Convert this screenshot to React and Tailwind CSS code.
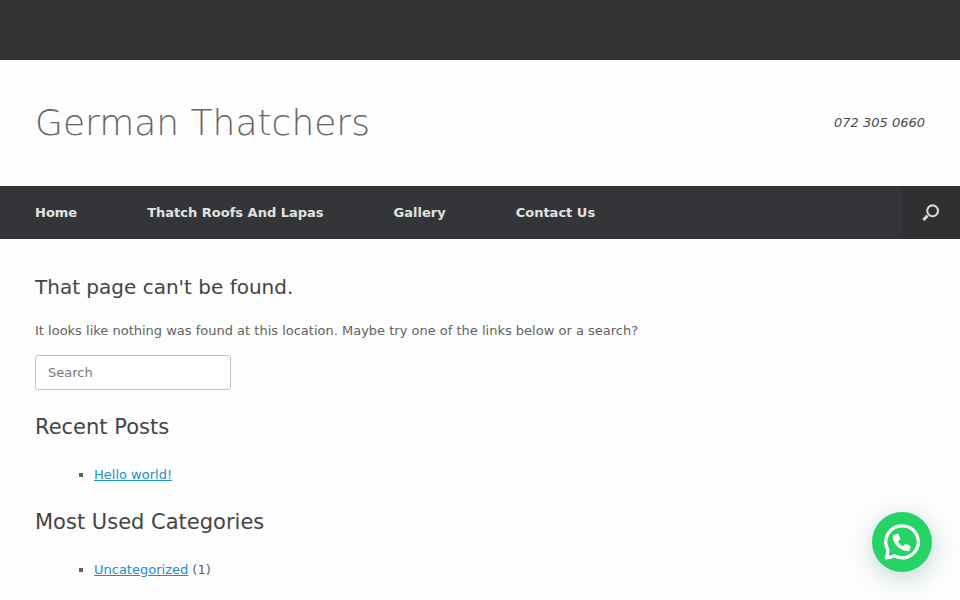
const navLinks = ['Home', 'Thatch Roofs And Lapas', 'Gallery', 'Contact Us']

function Header() {
  return (
    <header>
      <div className="h-[60px] bg-[#2f3132]"></div>
      <div className="flex items-center justify-between px-[35px] py-9">
        <h1 className="text-4xl leading-[54px] font-extralight text-[#666666]">
          <a href="#home">German Thatchers</a>
        </h1>
        <a href="tel:0723050660" className="text-[13px] italic text-[#4b4b4b]">072 305 0660</a>
      </div>
    </header>
  )
}

function Navbar() {
  return (
    <nav className="flex h-[53px] items-stretch justify-between bg-[#343538]">
      <ul className="flex items-center gap-[70px] pl-[35px]">
        {navLinks.map((label) => (
          <li key={label}>
            <a href="#menu" className="text-[13px] font-bold text-[#e2e2e2] hover:text-white">{label}</a>
          </li>
        ))}
      </ul>
      <button aria-label="Open search" className="flex w-[59px] items-center justify-center bg-[#2f3032]">
        <svg className="h-[17px] w-[17px]" viewBox="0 0 17 17" fill="none" stroke="#d8d8d8">
          <circle cx="10.6" cy="6.8" r="5.4" strokeWidth="2.1" />
          <path d="M5.6 11.6L1.3 16" strokeWidth="3" />
        </svg>
      </button>
    </nav>
  )
}

function LinkList({ title, label, count }) {
  return (
    <section>
      <h2 className="mb-6 text-[21px] leading-6 text-[#444444]">{title}</h2>
      <ul className="mb-6 list-[square] pl-[59px] leading-[23px]">
        <li>
          <a href="#post" className="text-[#248cc8] underline">{label}</a>
          {count && ` (${count})`}
        </li>
      </ul>
    </section>
  )
}

function WhatsAppButton() {
  return (
    <button
      aria-label="Open WhatsApp chat"
      className="fixed right-7 bottom-7 flex h-[60px] w-[60px] items-center justify-center rounded-full bg-[#25d366] shadow-[1px_6px_24px_0_rgba(7,94,84,0.24)]"
    >
      <svg className="h-9 w-9" viewBox="0 0 36 36" fill="none">
        <path
          d="M18.3 1.8A16 16 0 0 0 3.6 25.1C4 27.8 3.5 30.8 2.3 33.9C5.2 33.6 7.9 32.9 10.8 31.9A16 16 0 1 0 18.3 1.8Z"
          stroke="#fff"
          strokeWidth="3.3"
          strokeLinejoin="round"
        />
        <path
          d="M9.5 11L12.9 9.9C13.7 9.7 14.4 10.1 14.7 10.8L16.1 14.2C16.4 14.9 16.2 15.5 15.7 16L14 17.5C15 19.6 16.7 21.3 19 22.3L20.5 20.5C21 19.9 21.6 19.8 22.3 20L25.6 21.5C26.3 21.8 26.7 22.5 26.5 23.2L25.7 26.3C25.5 27 25 27.4 24.2 27.3C15.8 26.8 9 20.2 8.7 12.3C8.7 11.6 8.9 11.2 9.5 11Z"
          fill="#fff"
        />
      </svg>
    </button>
  )
}

function App() {
  return (
    <div className="min-h-screen bg-[#fdfdfd] font-['DejaVu_Sans',sans-serif] text-[13px] text-[#626262]">
      <Header />
      <Navbar />
      <main className="px-[35px] pt-9">
        <h1 className="mb-5 text-xl leading-6 text-[#444444]">That page can't be found.</h1>
        <p className="mb-3 leading-6">
          It looks like nothing was found at this location. Maybe try one of the links below or a search?
        </p>
        <form role="search" className="mb-[25px]">
          <input
            type="search"
            aria-label="Search"
            placeholder="Search"
            className="block h-[35px] w-[196px] rounded-[3px] border border-[#c0c0c0] bg-white px-3 placeholder:text-[#777777]"
          />
        </form>
        <LinkList title="Recent Posts" label="Hello world!" />
        <LinkList title="Most Used Categories" label="Uncategorized" count={1} />
      </main>
      <WhatsAppButton />
    </div>
  )
}

export default App
